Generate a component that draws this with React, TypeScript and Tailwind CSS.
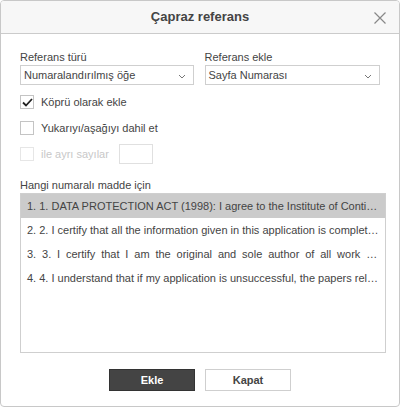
import React from "react";

const Chevron = () => (
  <svg width="8" height="5" viewBox="0 0 8 5" className="absolute right-[7px] top-[8px]">
    <path d="M1 1 L4 4 L7 1" fill="none" stroke="#777" strokeWidth="1" />
  </svg>
);

const Check = () => (
  <svg width="11" height="9" viewBox="0 0 11 9">
    <path d="M1 4.5 L4 7.5 L10 1" fill="none" stroke="#222" strokeWidth="1.8" />
  </svg>
);

export default function App() {
  const rows = [
    "1. 1. DATA PROTECTION ACT (1998): I agree to the Institute of Continuing Education",
    "2. 2. I certify that all the information given in this application is complete and accurate",
    "3. 3. I certify that I am the original and sole author of all work submitted",
    "4. 4. I understand that if my application is unsuccessful, the papers relating to it",
  ];
  return (
    <div
      className="w-[400px] h-[407px] bg-white text-[#444] text-[11px] border border-[#c8c8c8] rounded-[4px] overflow-hidden flex flex-col"
      style={{ fontFamily: '"Liberation Sans", Arial, sans-serif' }}
    >
      <div className="h-[33px] shrink-0 bg-[#f7f7f7] border-b border-[#cbcbcb] flex items-center justify-center relative">
        <span className="text-[13px] font-bold text-[#444]">Çapraz referans</span>
        <svg width="12" height="12" viewBox="0 0 12 12" className="absolute right-[13px] top-[11px]">
          <path d="M0.5 0.5 L11.5 11.5 M11.5 0.5 L0.5 11.5" stroke="#888" strokeWidth="1.2" />
        </svg>
      </div>
      <div className="px-[19px] pt-[16px] flex flex-col">
        <div className="flex gap-[11px]">
          <div className="w-[176px] flex flex-col">
            <div className="h-[15px] leading-[15px]">Referans türü</div>
            <div className="relative h-[20px] border border-[#cfcfcf] leading-[18px] pl-[3px] text-[#444]">
              Numaralandırılmış öğe
              <Chevron />
            </div>
          </div>
          <div className="w-[178px] flex flex-col">
            <div className="h-[15px] leading-[15px]">Referans ekle</div>
            <div className="relative h-[20px] border border-[#cfcfcf] leading-[18px] pl-[3px] text-[#444]">
              Sayfa Numarası
              <Chevron />
            </div>
          </div>
        </div>
        <div className="mt-[10px] flex items-center h-[14px]">
          <div className="w-[14px] h-[14px] border border-[#c4c4c4] bg-white flex items-center justify-center">
            <Check />
          </div>
          <span className="ml-[7px]">Köprü olarak ekle</span>
        </div>
        <div className="mt-[12px] flex items-center h-[14px]">
          <div className="w-[14px] h-[14px] border border-[#c4c4c4] bg-white" />
          <span className="ml-[7px]">Yukarıyı/aşağıyı dahil et</span>
        </div>
        <div className="mt-[9px] flex items-center h-[20px]">
          <div className="w-[14px] h-[14px] border border-[#e6e6e6] bg-white" />
          <span className="ml-[7px] text-[#c8c8c8]">ile ayrı sayılar</span>
          <div className="ml-[10px] w-[34px] h-[20px] border border-[#e0e0e0]" />
        </div>
        <div className="mt-[14px] h-[15px] leading-[15px]">Hangi numaralı madde için</div>
        <div className="w-[366px] h-[160px] border border-[#cfcfcf] flex flex-col">
          {rows.map((r, i) => (
            <div
              key={i}
              className={
                "h-[24px] leading-[24px] px-[6px] whitespace-nowrap overflow-hidden text-ellipsis " +
                (i === 0 ? "bg-[#cbcbcb]" : "")
              }
              style={i === 2 ? { wordSpacing: "2.8px" } : undefined}
            >
              {r}
            </div>
          ))}
        </div>
        <div className="mt-[16px] flex justify-center gap-[10px]">
          <button className="w-[86px] h-[22px] bg-[#444] border border-[#333] text-white font-bold text-[11px]">
            Ekle
          </button>
          <button className="w-[86px] h-[22px] bg-white border border-[#cfcfcf] text-[#444] font-bold text-[11px]">
            Kapat
          </button>
        </div>
      </div>
    </div>
  );
}
